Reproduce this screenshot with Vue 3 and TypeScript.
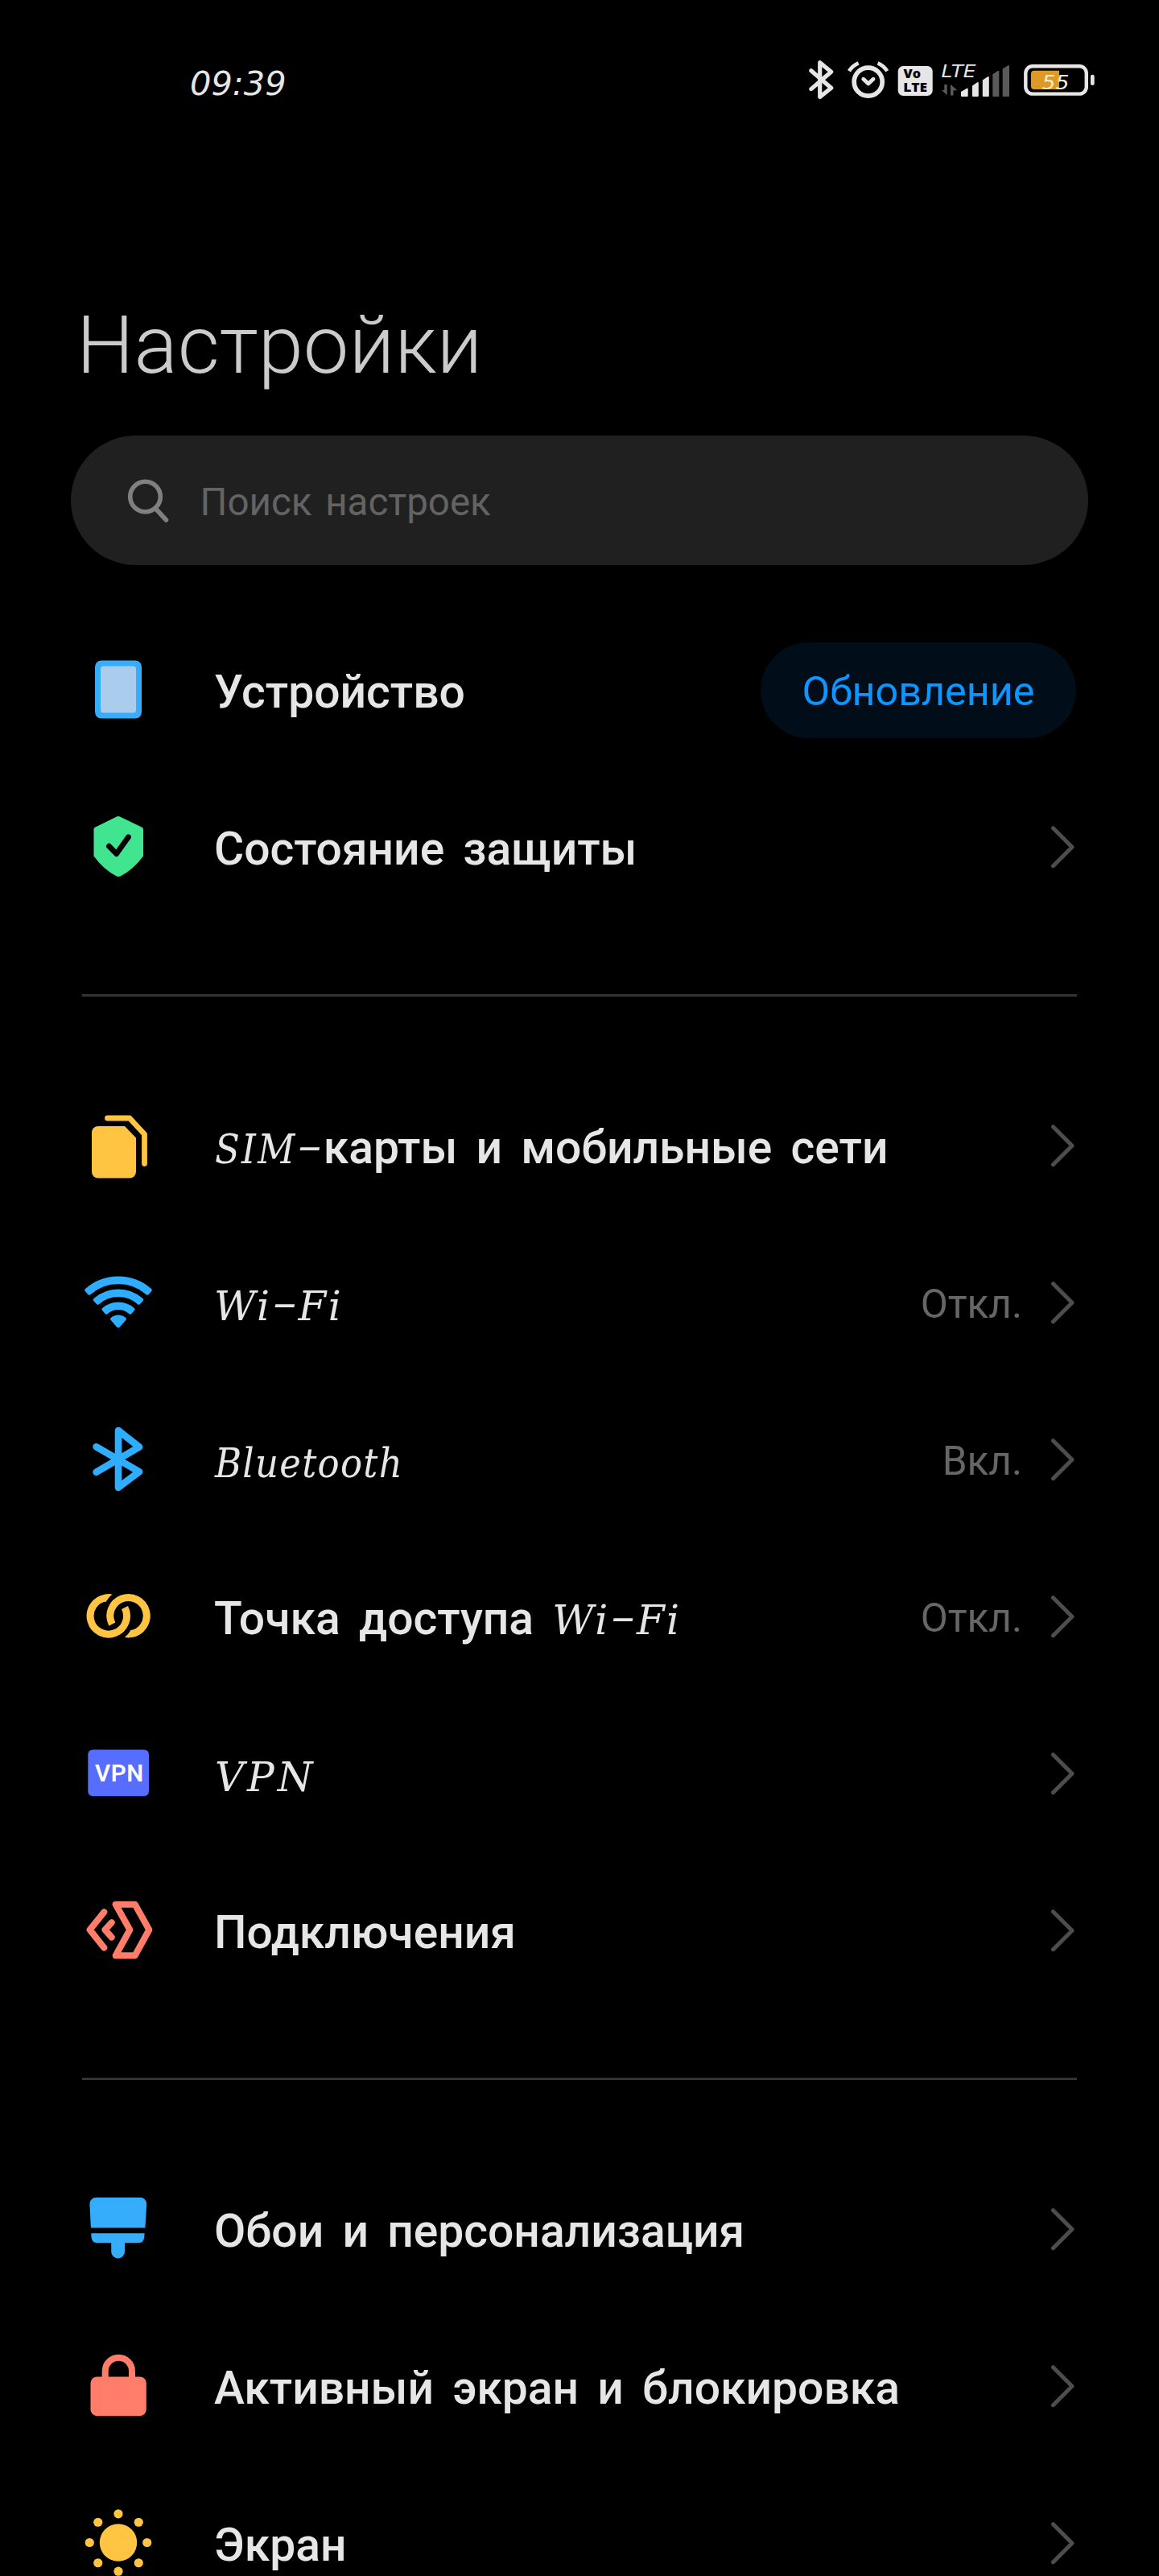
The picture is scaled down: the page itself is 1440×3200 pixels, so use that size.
<script setup lang="ts">
interface Part {
  text: string
  kind: 'ru' | 'sim' | 'wifi' | 'bt' | 'vpn' | 'dash'
}
interface Row {
  icon: string
  parts: Part[]
  value?: string
  button?: string
}

const wifi: Part[] = [
  { text: 'Wi', kind: 'wifi' },
  { text: '–', kind: 'dash' },
  { text: 'Fi', kind: 'wifi' },
]

const sections: Row[][] = [
  [
    { icon: 'device', parts: [{ text: 'Устройство', kind: 'ru' }], button: 'Обновление' },
    { icon: 'shield', parts: [{ text: 'Состояние защиты', kind: 'ru' }] },
  ],
  [
    {
      icon: 'sim',
      parts: [
        { text: 'SIM', kind: 'sim' },
        { text: '–', kind: 'dash' },
        { text: 'карты и мобильные сети', kind: 'ru' },
      ],
    },
    { icon: 'wifi', parts: wifi, value: 'Откл.' },
    { icon: 'bluetooth', parts: [{ text: 'Bluetooth', kind: 'bt' }], value: 'Вкл.' },
    { icon: 'hotspot', parts: [{ text: 'Точка доступа ', kind: 'ru' }, ...wifi], value: 'Откл.' },
    { icon: 'vpn', parts: [{ text: 'VPN', kind: 'vpn' }] },
    { icon: 'links', parts: [{ text: 'Подключения', kind: 'ru' }] },
  ],
  [
    { icon: 'brush', parts: [{ text: 'Обои и персонализация', kind: 'ru' }] },
    { icon: 'lock', parts: [{ text: 'Активный экран и блокировка', kind: 'ru' }] },
    { icon: 'sun', parts: [{ text: 'Экран', kind: 'ru' }] },
  ],
]

// Annular sector opening upwards around (48, 76.5)
function sector(outer: number, inner: number): string {
  const a = (41.5 * Math.PI) / 180
  const p = (r: number, s: number) =>
    `${(48 + s * r * Math.sin(a)).toFixed(2)} ${(76.5 - r * Math.cos(a)).toFixed(2)}`
  return `M${p(outer, -1)}A${outer} ${outer} 0 0 1 ${p(outer, 1)}L${p(inner, 1)}A${inner} ${inner} 0 0 0 ${p(inner, -1)}Z`
}
const wifiPaths: string[] = [sector(60, 54.5), sector(44, 38.5), sector(28, 22.5), sector(12, 0.5)]

const rays: number[][] = [0, 1, 2, 3, 4, 5, 6, 7].map((i) => [
  48 + 35.7 * Math.cos((i * Math.PI) / 4),
  46.5 + 35.7 * Math.sin((i * Math.PI) / 4),
])
</script>

<template>
  <main class="screen">
    <header class="status">
      <span class="clock">09:39</span>
      <svg class="status-icons" width="400" height="60" viewBox="0 0 400 60">
        <g fill="none" stroke="#e6e6e6" stroke-linecap="round" stroke-linejoin="round">
          <path stroke-width="5.2" d="M27.8 17.8L52.7 39.3L38.7 50.5V7.7L52.7 19.2L27.8 40.6" />
          <circle stroke-width="5.7" cx="98.7" cy="31.7" r="17.5" />
          <path stroke-width="4.8" d="M92.8 28.2L98.8 34L105 28.2" />
          <path stroke-width="4.6" stroke-linecap="butt" d="M75 18.3Q79 11.6 86.6 8.3M110.6 8.3Q118 11.6 122.3 18.3" />
          <rect stroke-width="4.4" x="294.3" y="12.2" width="75.5" height="34.4" rx="8.5" />
        </g>
        <rect x="135.7" y="12" width="43" height="37" rx="6.5" fill="#e6e6e6" />
        <text class="volte" x="142.6" y="27.4" textLength="21.5" lengthAdjust="spacingAndGlyphs">Vo</text>
        <text class="volte" x="142.2" y="44.2" textLength="30" lengthAdjust="spacingAndGlyphs">LTE</text>
        <text class="lte" x="189.5" y="26" textLength="43" lengthAdjust="spacingAndGlyphs">LTE</text>
        <path fill="#5a5a5a" d="M193.3 35h3.4v13.3L190 42h3.3zM201 35l8.5 7.2h-5v6.3H201z" />
        <g stroke-width="2" stroke-linejoin="round">
          <path fill="#e6e6e6" stroke="#e6e6e6" d="M215 49v-4.5l6.7-4V49zM229 49V37l5.8-4V49zM241.8 49V30l6-4V49z" />
          <path fill="#5a5a5a" stroke="#5a5a5a" d="M254.3 49V22.8l6-4V49zM266.7 49V16l6.3-4V49z" />
        </g>
        <path fill="#de9a25" d="M336 17.7V41H305a4 4 0 0 1-4-4V21.7a4 4 0 0 1 4-4z" />
        <rect x="375" y="22.7" width="4.7" height="13.3" rx="2.3" fill="#e6e6e6" />
        <text class="level" x="314.5" y="41" textLength="34" lengthAdjust="spacingAndGlyphs">55</text>
      </svg>
    </header>

    <h1 class="title">Настройки</h1>

    <div class="search">
      <svg width="54" height="58" viewBox="0 0 54 58" fill="none" stroke="#808080" stroke-width="5.6" stroke-linecap="round">
        <circle cx="22.5" cy="24" r="18.8" />
        <path d="M35.5 39L48.5 53" />
      </svg>
      <span>Поиск настроек</span>
    </div>

    <section v-for="(rows, s) in sections" :key="s" class="section">
      <div v-for="row in rows" :key="row.icon" class="row">
        <svg class="icon" width="96" height="96" viewBox="0 0 96 96">
          <g v-if="row.icon === 'device'">
            <rect x="19" y="10.5" width="58" height="72" rx="8" fill="#36adfb" />
            <rect x="26" y="17.5" width="44" height="58" rx="3.5" fill="#aacded" />
          </g>
          <g v-else-if="row.icon === 'shield'">
            <path fill="#42e58f" d="M45.5 9.7Q48 8.4 50.5 9.7L77.5 22.8Q79 23.5 79 25V58.5Q67 75 51 83.2Q48.2 84.8 45.5 83.2Q29.5 75 17.5 58.5V25Q17.5 23.5 19 22.8z" />
            <path fill="none" stroke="#000" stroke-width="6.8" stroke-linecap="round" stroke-linejoin="round" d="M36.4 46.2L45.7 55.6L60.5 34.8" />
          </g>
          <g v-else-if="row.icon === 'sim'">
            <path fill="#ffc542" d="M23 23H56L70 37.5V79.5a8 8 0 0 1-8 8H23a8 8 0 0 1-8-8V31a8 8 0 0 1 8-8z" />
            <path fill="none" stroke="#ffc542" stroke-width="6.8" stroke-linecap="round" stroke-linejoin="round" d="M34.5 13H62L80.5 33V69.5" />
          </g>
          <g v-else-if="row.icon === 'wifi'" fill="#2fadff" stroke="#2fadff" stroke-width="4" stroke-linejoin="round">
            <path v-for="d in wifiPaths" :key="d" :d="d" />
          </g>
          <path
            v-else-if="row.icon === 'bluetooth'"
            fill="none" stroke="#2fadff" stroke-width="8.6" stroke-linecap="round" stroke-linejoin="round"
            d="M20.6 31.2L74 62.3L48 81.8V11L74 31.5L20.6 62.8"
          />
          <g v-else-if="row.icon === 'hotspot'">
            <g v-for="t in ['', 'rotate(180 48.15 46.3)']" :key="t" :transform="t">
              <path fill="none" stroke="#ffc542" stroke-width="9" d="M32.5 23.9A22.7 22.7 0 1 0 56 36" />
              <path fill="#ffc542" d="M31.5 19.6L36 19.1L40.5 19.6Q36 23 32.8 28.6L31.5 28.8z" />
            </g>
          </g>
          <g v-else-if="row.icon === 'vpn'">
            <rect x="10.3" y="17.5" width="75.7" height="57.7" rx="6" fill="#566dff" />
            <text class="vpn-text" x="19" y="57.2" textLength="60">VPN</text>
          </g>
          <path
            v-else-if="row.icon === 'links'"
            fill="none" stroke="#ff7d69" stroke-width="8" stroke-linecap="round" stroke-linejoin="round"
            d="M30.3 24.2L12.6 46.3L30.3 68.5M39.7 37.2L31.5 46.3L39.7 55.5M44.7 14.8H68.7L86.3 46.3L68.7 78.2H44.7L62.3 46.3z"
          />
          <g v-else-if="row.icon === 'brush'" fill="#36adfb">
            <path d="M20.4 7.8H75.2a8 8 0 0 1 8 8.3L81.4 45.5H13.9L12.4 16.1a8 8 0 0 1 8-8.3z" />
            <path d="M14.2 52.2H80.6L80.2 57.5Q79.5 64.2 73 64.2H56V75a8.4 8.4 0 0 1-16.8 0V64.2H22Q15.3 64.2 14.6 57.5z" />
          </g>
          <g v-else-if="row.icon === 'lock'">
            <rect x="13.5" y="35.5" width="69.3" height="48.7" rx="8" fill="#ff7d69" />
            <path fill="none" stroke="#ff7d69" stroke-width="8" d="M31.7 38V28.4a16.65 16.65 0 0 1 33.3 0V38" />
          </g>
          <g v-else fill="#ffc542">
            <circle cx="48" cy="46.5" r="23.2" />
            <circle v-for="(r, i) in rays" :key="i" :cx="r[0]" :cy="r[1]" r="5.6" />
          </g>
        </svg>
        <div class="label"><span v-for="(p, i) in row.parts" :key="i" :class="p.kind">{{ p.text }}</span></div>
        <span v-if="row.value" class="value">{{ row.value }}</span>
        <button v-if="row.button" class="update">{{ row.button }}</button>
        <svg v-else class="arrow" width="30" height="56" viewBox="0 0 30 56" fill="none" stroke="#4d4d4d" stroke-width="5" stroke-linecap="round" stroke-linejoin="round">
          <path d="M2.5 3.7L26 27.2L2.5 50.7" />
        </svg>
      </div>
    </section>
  </main>
</template>

<style>
body {
  background: #000;
}
</style>

<style scoped>
.screen {
  width: 1440px;
  height: 3200px;
  overflow: hidden;
  background: #000;
  color: #e6e6e6;
  font-family: Roboto, "Noto Sans", sans-serif;
}
.status {
  display: flex;
  justify-content: space-between;
  align-items: center;
  height: 60px;
  padding: 70px 60px 0 236px;
}
.clock {
  font: italic 200 41.5px/60px "DejaVu Sans", sans-serif;
  padding-top: 7px;
}
.volte {
  font: 800 15.5px "Open Sans", sans-serif;
  fill: #000;
}
.lte {
  font: italic 200 21.5px "DejaVu Sans", sans-serif;
  fill: #e6e6e6;
}
.level {
  font: italic 200 25px "DejaVu Sans", sans-serif;
  fill: #f5ecd4;
}
.vpn-text {
  font: 600 29.5px Roboto, sans-serif;
  fill: #fff;
}
.title {
  margin: 0;
  padding: 248px 0 0 95px;
  font-size: 101px;
  font-weight: 300;
  line-height: 101px;
  color: #cbcbcb;
}
.search {
  display: flex;
  align-items: center;
  gap: 37px;
  height: 161px;
  margin: 62px 88px 58px;
  padding-left: 69.5px;
  box-sizing: border-box;
  border-radius: 81px;
  background: #202020;
  color: #636363;
  font-size: 47.5px;
  word-spacing: 5px;
}
.search span {
  padding-top: 4px;
}
.section + .section {
  margin-top: 85px;
}
.section + .section::before {
  content: "";
  display: block;
  height: 3px;
  margin: 0 102px 88px;
  background: #333;
}
.row {
  display: flex;
  align-items: center;
  height: 195px;
  padding: 0 103px 0 99px;
}
.label {
  flex: 1;
  margin-left: 71px;
  padding-top: 4px;
  font-size: 57px;
  font-weight: 500;
  line-height: 70px;
  white-space: pre;
}
.ru {
  word-spacing: 9px;
}
.sim, .wifi, .bt, .vpn, .dash {
  font-family: "DejaVu Serif", serif;
  font-size: 50px;
  font-weight: 400;
  font-style: italic;
  line-height: 0;
}
.sim, .bt, .vpn {
  margin-left: 1px;
}
.sim {
  font-family: "DejaVu Serif Condensed", "DejaVu Serif", serif;
  letter-spacing: 2.3px;
}
.wifi {
  letter-spacing: 2.5px;
}
.bt {
  font-family: "DejaVu Serif Condensed", "DejaVu Serif", serif;
  letter-spacing: 1.3px;
}
.vpn {
  letter-spacing: 4px;
}
.dash {
  font-family: Roboto, sans-serif;
  font-size: 50px;
  letter-spacing: 1px;
}
.value {
  padding-top: 3px;
  margin-right: 36px;
  font-size: 49.5px;
  color: #666;
}
.arrow {
  margin-right: 1px;
}
.update {
  width: 392px;
  height: 119px;
  padding: 2px 0 0;
  border: 0;
  border-radius: 60px;
  background: #010e19;
  color: #0d96ff;
  font: 400 50.3px Roboto, sans-serif;
}
</style>
